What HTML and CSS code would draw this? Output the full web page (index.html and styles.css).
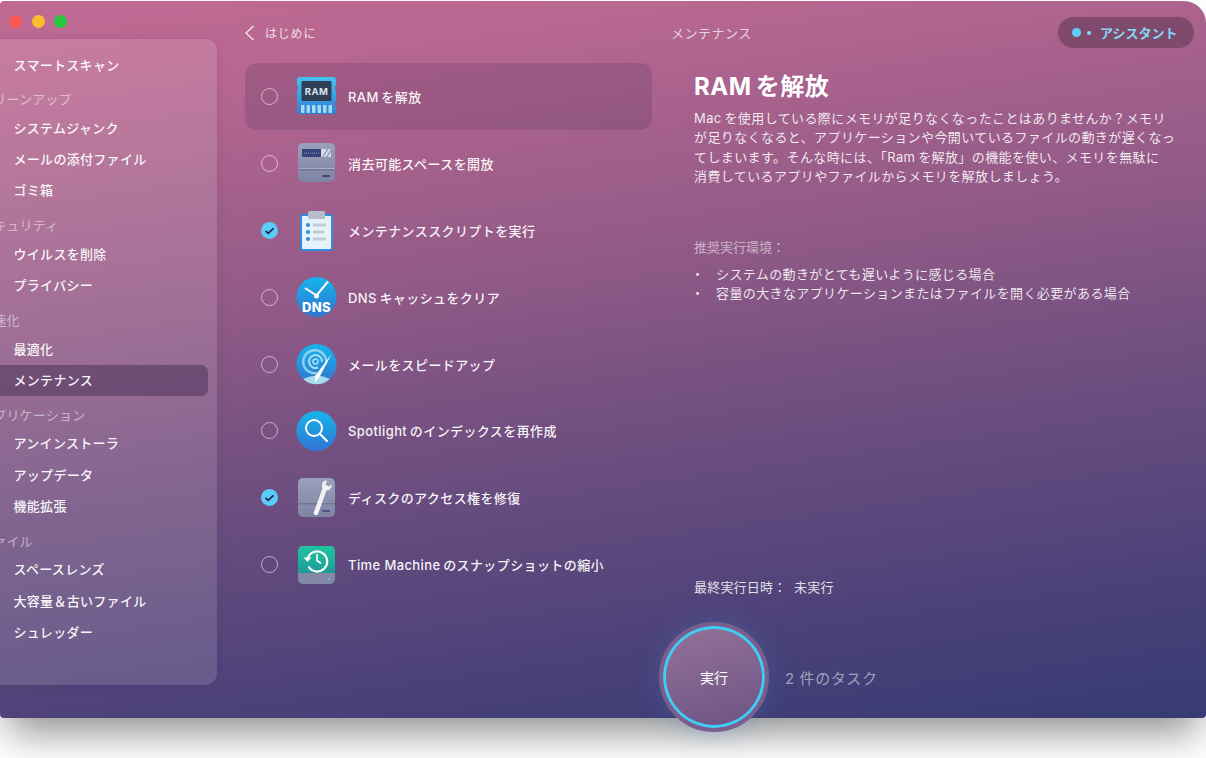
FILE: index.html
```html
<!DOCTYPE html>
<html lang="ja">
<head>
<meta charset="utf-8">
<title>メンテナンス</title>
<link rel="stylesheet" href="styles.css">
</head>
<body>
<div class="window">
  <div class="lights"><i class="light red"></i><i class="light yellow"></i><i class="light green"></i></div>
  <aside class="sidebar">
    <a class="item">スマートスキャン</a>
    <div class="label">クリーンアップ</div>
    <a class="item">システムジャンク</a>
    <a class="item">メールの添付ファイル</a>
    <a class="item">ゴミ箱</a>
    <div class="label">セキュリティ</div>
    <a class="item">ウイルスを削除</a>
    <a class="item">プライバシー</a>
    <div class="label">高速化</div>
    <a class="item">最適化</a>
    <a class="item active">メンテナンス</a>
    <div class="label">アプリケーション</div>
    <a class="item">アンインストーラ</a>
    <a class="item">アップデータ</a>
    <a class="item">機能拡張</a>
    <div class="label">ファイル</div>
    <a class="item">スペースレンズ</a>
    <a class="item">大容量＆古いファイル</a>
    <a class="item">シュレッダー</a>
  </aside>
  <main class="content">
    <header class="topbar">
      <div class="back">
        <svg class="chevron" viewBox="0 0 11 16"><path d="M9.500 1 L2 8 L9.500 15" fill="none" stroke="#fff" stroke-opacity=".8" stroke-width="1.400"/></svg>
        <span>はじめに</span>
      </div>
      <div class="title">メンテナンス</div>
      <div class="assistant"><i class="dot big"></i><i class="dot small"></i><span>アシスタント</span></div>
    </header>
    <div class="panes">
      <ul class="tasks">
        <li class="task selected">
          <i class="radio"></i>
          <svg class="icon" viewBox="0 0 44 44">
            <defs><linearGradient id="ramg" x1="0" y1="0" x2="0" y2="1"><stop offset="0" stop-color="#45c3f0"/><stop offset="1" stop-color="#2f7fd6"/></linearGradient></defs>
            <path d="M5 3h33a3 3 0 0 1 3 3v6h-1v4h1v12h-1v4h1v5a3 3 0 0 1-3 3H5a3 3 0 0 1-3-3v-5h1v-4H2V16h1v-4H2V6a3 3 0 0 1 3-3z" fill="url(#ramg)"/>
            <rect x="6.500" y="7" width="30" height="20" rx="1" fill="#2f3e55"/>
            <text x="21.500" y="20.500" class="ram-text">RAM</text>
            <g fill="#a4d8f3"><rect x="6" y="31" width="3.500" height="8" rx="1"/><rect x="11.500" y="31" width="3.500" height="8" rx="1"/><rect x="17" y="31" width="3.500" height="8" rx="1"/><rect x="22.500" y="31" width="3.500" height="8" rx="1"/><rect x="28" y="31" width="3.500" height="8" rx="1"/><rect x="33.500" y="31" width="3.500" height="8" rx="1"/></g>
          </svg>
          <span>RAM&#8201;を解放</span>
        </li>
        <li class="task">
          <i class="radio"></i>
          <svg class="icon" viewBox="0 0 44 44">
            <defs><linearGradient id="disk" x1="0" y1="0" x2="0" y2="1"><stop offset="0" stop-color="#9a9fbb"/><stop offset="1" stop-color="#7f84a3"/></linearGradient></defs>
            <rect x="3" y="2" width="37" height="39" rx="5" fill="url(#disk)"/>
            <rect x="3" y="27" width="37" height="1" fill="#a9adc4"/>
            <rect x="3" y="28" width="37" height="1.500" fill="#72779a"/>
            <rect x="7" y="8" width="22" height="8" fill="#38427a"/>
            <path d="M9 12h16" stroke="#8d94bd" stroke-width="1" stroke-dasharray="1 1"/>
            <rect x="26" y="8" width="10" height="8" fill="#d8dcea"/>
            <path d="M27 16l5-8h1.500l-5 8zM31 16l5-8v2.500L32.500 16z" fill="#8f94b4"/>
            <rect x="27" y="34" width="8" height="2" rx="1" fill="#3c4775"/>
          </svg>
          <span>消去可能スペースを開放</span>
        </li>
        <li class="task">
          <i class="radio checked"><svg viewBox="0 0 17 17"><path d="M4.500 8.800l2.700 2.500 5.300-5" fill="none" stroke="#20254f" stroke-width="1.700"/></svg></i>
          <svg class="icon" viewBox="0 0 44 44">
            <rect x="5" y="6" width="33" height="37" rx="3" fill="#2f8ee0"/>
            <rect x="7" y="8" width="29" height="33" rx="1" fill="#e6f3fb"/>
            <rect x="13" y="3" width="17" height="8" rx="1.500" fill="#b9bccb"/>
            <g fill="#2f8ee0"><circle cx="13" cy="17" r="2"/><circle cx="13" cy="24" r="2"/><circle cx="13" cy="31" r="2"/></g>
            <g fill="#c3cad8"><rect x="18" y="15.500" width="13" height="3"/><rect x="18" y="22.500" width="11" height="3"/><rect x="18" y="29.500" width="13" height="3"/></g>
          </svg>
          <span>メンテナンススクリプトを実行</span>
        </li>
        <li class="task">
          <i class="radio"></i>
          <svg class="icon" viewBox="0 0 44 44">
            <defs><linearGradient id="blue" x1="0" y1="0" x2="0" y2="1"><stop offset="0" stop-color="#15b5ec"/><stop offset="1" stop-color="#3274d0"/></linearGradient></defs>
            <circle cx="21.500" cy="22" r="20" fill="url(#blue)"/>
            <path d="M10 13l11.500 7.500L33 6.500" fill="none" stroke="#fff" stroke-width="2"/>
            <circle cx="21.500" cy="21" r="2.500" fill="#fff"/>
            <text x="21.500" y="37" class="dns-text">DNS</text>
          </svg>
          <span>DNS&#8201;キャッシュをクリア</span>
        </li>
        <li class="task">
          <i class="radio"></i>
          <svg class="icon" viewBox="0 0 44 44">
            <circle cx="21.500" cy="22" r="20" fill="url(#blue)"/>
            <path d="M8 37a20 20 0 0 0 27 0q-13-7-27 0z" fill="#a9d9ef"/>
            <path d="M31 22a11.500 11.500 0 1 0-9 9" fill="none" stroke="#8fd3f2" stroke-width="2.400"/>
            <path d="M27 20a6.500 6.500 0 1 0-4 5.500" fill="none" stroke="#a8def5" stroke-width="2"/>
            <circle cx="20.500" cy="19.500" r="2.500" fill="none" stroke="#a8def5" stroke-width="1.500"/>
            <path d="M36.500 12L24.500 35l-4.500 5.500 .5-7z" fill="#fff"/>
          </svg>
          <span>メールをスピードアップ</span>
        </li>
        <li class="task">
          <i class="radio"></i>
          <svg class="icon" viewBox="0 0 44 44">
            <circle cx="21.500" cy="22" r="20" fill="url(#blue)"/>
            <circle cx="19" cy="19" r="8" fill="none" stroke="#fff" stroke-width="2"/>
            <path d="M25 25l7 7" stroke="#fff" stroke-width="2.200" stroke-linecap="round"/>
          </svg>
          <span>Spotlight&#8201;のインデックスを再作成</span>
        </li>
        <li class="task">
          <i class="radio checked"><svg viewBox="0 0 17 17"><path d="M4.500 8.800l2.700 2.500 5.300-5" fill="none" stroke="#20254f" stroke-width="1.700"/></svg></i>
          <svg class="icon" viewBox="0 0 44 44">
            <rect x="3" y="2" width="37" height="39" rx="5" fill="url(#disk)"/>
            <rect x="3" y="27" width="37" height="1.500" fill="#72779a"/>
            <rect x="27" y="34" width="8" height="2" rx="1" fill="#4b5285"/>
            <path d="M21 37L30 12" stroke="#f2f2f6" stroke-width="4.500" stroke-linecap="round"/>
            <path d="M28.500 5.500a6 6 0 0 0 0 8l2 1a6 6 0 0 0 6.500-6l-3.500 2-3-2 1.500-4a6 6 0 0 0-3.500 1z" fill="#f2f2f6"/>
          </svg>
          <span>ディスクのアクセス権を修復</span>
        </li>
        <li class="task">
          <i class="radio"></i>
          <svg class="icon" viewBox="0 0 44 44">
            <defs><linearGradient id="teal" x1="0" y1="0" x2="0" y2="1"><stop offset="0" stop-color="#22c3a0"/><stop offset="1" stop-color="#1d9a98"/></linearGradient></defs>
            <rect x="3" y="3" width="37" height="38" rx="5" fill="#8388a6"/>
            <path d="M8 3h27a5 5 0 0 1 5 5v22H3V8a5 5 0 0 1 5-5z" fill="url(#teal)"/>
            <path d="M12.500 16a10 10 0 1 1 1 7.500" fill="none" stroke="#fff" stroke-width="2.200"/>
            <path d="M8.500 14.500h8l-4 4.500z" fill="#fff"/>
            <path d="M22 11v6.500l4 3" fill="none" stroke="#fff" stroke-width="1.600"/>
            <circle cx="34" cy="36" r="1" fill="#5ccbf7"/>
          </svg>
          <span>Time Machine&#8201;のスナップショットの縮小</span>
        </li>
      </ul>
      <section class="detail">
        <h1>RAM&#8201;を解放</h1>
        <p class="desc">Mac&#8201;を使用している際にメモリが足りなくなったことはありませんか？メモリ<br>が足りなくなると、アプリケーションや今開いているファイルの動きが遅くなっ<br>てしまいます。そんな時には、「Ram&#8201;を解放」の機能を使い、メモリを無駄に<br>消費しているアプリやファイルからメモリを解放しましょう。</p>
        <div class="rec-title">推奨実行環境：</div>
        <ul class="rec">
          <li>システムの動きがとても遅いように感じる場合</li>
          <li>容量の大きなアプリケーションまたはファイルを開く必要がある場合</li>
        </ul>
        <div class="last">最終実行日時：&nbsp;&nbsp;未実行</div>
      </section>
    </div>
    <footer class="footer">
      <button class="run"><span>実行</span></button>
      <span class="count">2 件のタスク</span>
    </footer>
  </main>
</div>
</body>
</html>
```
FILE: styles.css
```css
* { box-sizing: border-box; }
html, body { margin: 0; padding: 0; height: 100%; overflow: hidden; background: #fff; }
body { font-family: Inter, "Noto Sans CJK JP", sans-serif; color: #fff; }
ul { list-style: none; margin: 0; padding: 0; }

.window {
  position: relative;
  display: flex;
  width: 1206px;
  height: 717px;
  margin-top: 1px;
  border-radius: 4px 22px 4px 4px;
  background: linear-gradient(172deg, #c06a94 0%, #b96891 10%, #925a87 38%, #704f80 58%, #4d4279 82%, #373a74 100%);
  box-shadow: 0 22px 40px -8px rgba(0, 0, 0, .45);
}

.lights { position: absolute; left: 9px; top: 14px; display: flex; gap: 9.500px; }
.light { width: 13px; height: 13px; border-radius: 50%; }
.red { background: #fc5753; }
.yellow { background: #fdbc2e; }
.green { background: #27c840; }

.sidebar {
  flex: none;
  width: 257px;
  height: 646px;
  margin: 38px 0 0 -40px;
  padding: 10.500px 9px 0 0;
  border-radius: 12px;
  background: rgba(255, 255, 255, .13);
  box-shadow: 0 1px 12px rgba(60, 30, 80, .12);
}
.item {
  display: block;
  height: 31.300px;
  padding-left: 53.500px;
  font-size: 13px;
  font-weight: 500;
  line-height: 31px;
  letter-spacing: .3px;
  border-radius: 7px;
  color: rgba(255, 255, 255, .95);
}
.item.active { background: rgba(70, 45, 85, .5); }
.label {
  height: 24.600px;
  margin-top: 7.500px;
  padding-left: 20px;
  font-size: 13px;
  line-height: 22px;
  letter-spacing: .2px;
  color: rgba(255, 255, 255, .5);
}

.content { flex: 1; min-width: 0; padding: 16px 12px 0 28px; display: flex; flex-direction: column; }

.topbar { flex: none; display: flex; align-items: center; height: 31px; }
.back { width: 407px; display: flex; align-items: center; gap: 10px; font-size: 12px; color: rgba(255, 255, 255, .78); letter-spacing: .8px; }
.chevron { width: 11px; height: 16px; margin-left: -1px; }
.title { margin-left: 19px; font-size: 13px; letter-spacing: .5px; color: rgba(255, 255, 255, .72); }
.assistant {
  margin-left: auto;
  width: 136px;
  height: 31px;
  padding-left: 14px;
  display: flex;
  align-items: center;
  border-radius: 16px;
  background: #7f4a6c;
  color: #86d8f4;
  font-size: 13px;
  font-weight: 700;
}
.dot { display: block; border-radius: 50%; background: #62cdf7; }
.dot.big { width: 9px; height: 9px; }
.dot.small { width: 4px; height: 4px; margin: 0 9px 0 6px; background: #8fd8f2; }

.panes { flex: none; display: flex; height: 560px; margin-top: 15px; }
.tasks { flex: none; width: 407px; }
.task { display: flex; align-items: center; height: 66.900px; font-size: 13px; font-weight: 500; letter-spacing: .4px; color: rgba(255, 255, 255, .95); }
.task.selected { background: rgba(60, 40, 75, .18); border-radius: 12px; }
.radio { flex: none; display: block; width: 17px; height: 17px; margin: 0 19px 0 16px; border-radius: 50%; border: 1.500px solid rgba(255, 255, 255, .55); }
.radio.checked { border: 0; background: #5ccbf7; }
.radio.checked svg { display: block; width: 17px; height: 17px; }
.icon { flex: none; width: 44px; height: 44px; margin: 0 9px 0 -2px; }
.ram-text { font: 700 9.500px Inter, sans-serif; fill: #d8e3ee; text-anchor: middle; }
.dns-text { font: 800 13px Inter, sans-serif; fill: #fff; text-anchor: middle; }

.detail { flex: 1; margin-left: 42px; display: flex; flex-direction: column; }
.detail h1 { margin: 8px 0 0; font-size: 24px; font-weight: 700; line-height: 32px; letter-spacing: .5px; }
.desc { margin: 6px 0 0; font-size: 13px; line-height: 19.400px; letter-spacing: .4px; color: rgba(255, 255, 255, .88); white-space: nowrap; }
.rec-title { margin-top: 51px; font-size: 13px; line-height: 19px; color: rgba(255, 255, 255, .55); }
.rec { margin-top: 8px; font-size: 13px; line-height: 19.400px; color: rgba(255, 255, 255, .88); }
.rec li { position: relative; padding-left: 22px; letter-spacing: .38px; }
.rec li::before { content: "・"; position: absolute; left: -3px; }
.last { margin-top: auto; margin-bottom: 26px; font-size: 13px; line-height: 19px; letter-spacing: .2px; color: rgba(255, 255, 255, .85); }

.footer { flex: none; display: flex; align-items: center; gap: 16px; margin-top: -1px; padding-left: 414px; height: 110px; }
.run {
  flex: none;
  width: 110px;
  height: 110px;
  border-radius: 50%;
  border: 4px solid #7a5f8e;
  padding: 0;
  background: linear-gradient(165deg, #937399, #6d5284);
  box-shadow: inset 0 0 0 3px #3fcdf5, 0 0 26px rgba(70, 120, 190, .35);
  color: #fff;
  font: 400 14px Inter, "Noto Sans CJK JP", sans-serif;
}
.count { font-size: 15px; letter-spacing: .6px; color: rgba(255, 255, 255, .5); }
```
